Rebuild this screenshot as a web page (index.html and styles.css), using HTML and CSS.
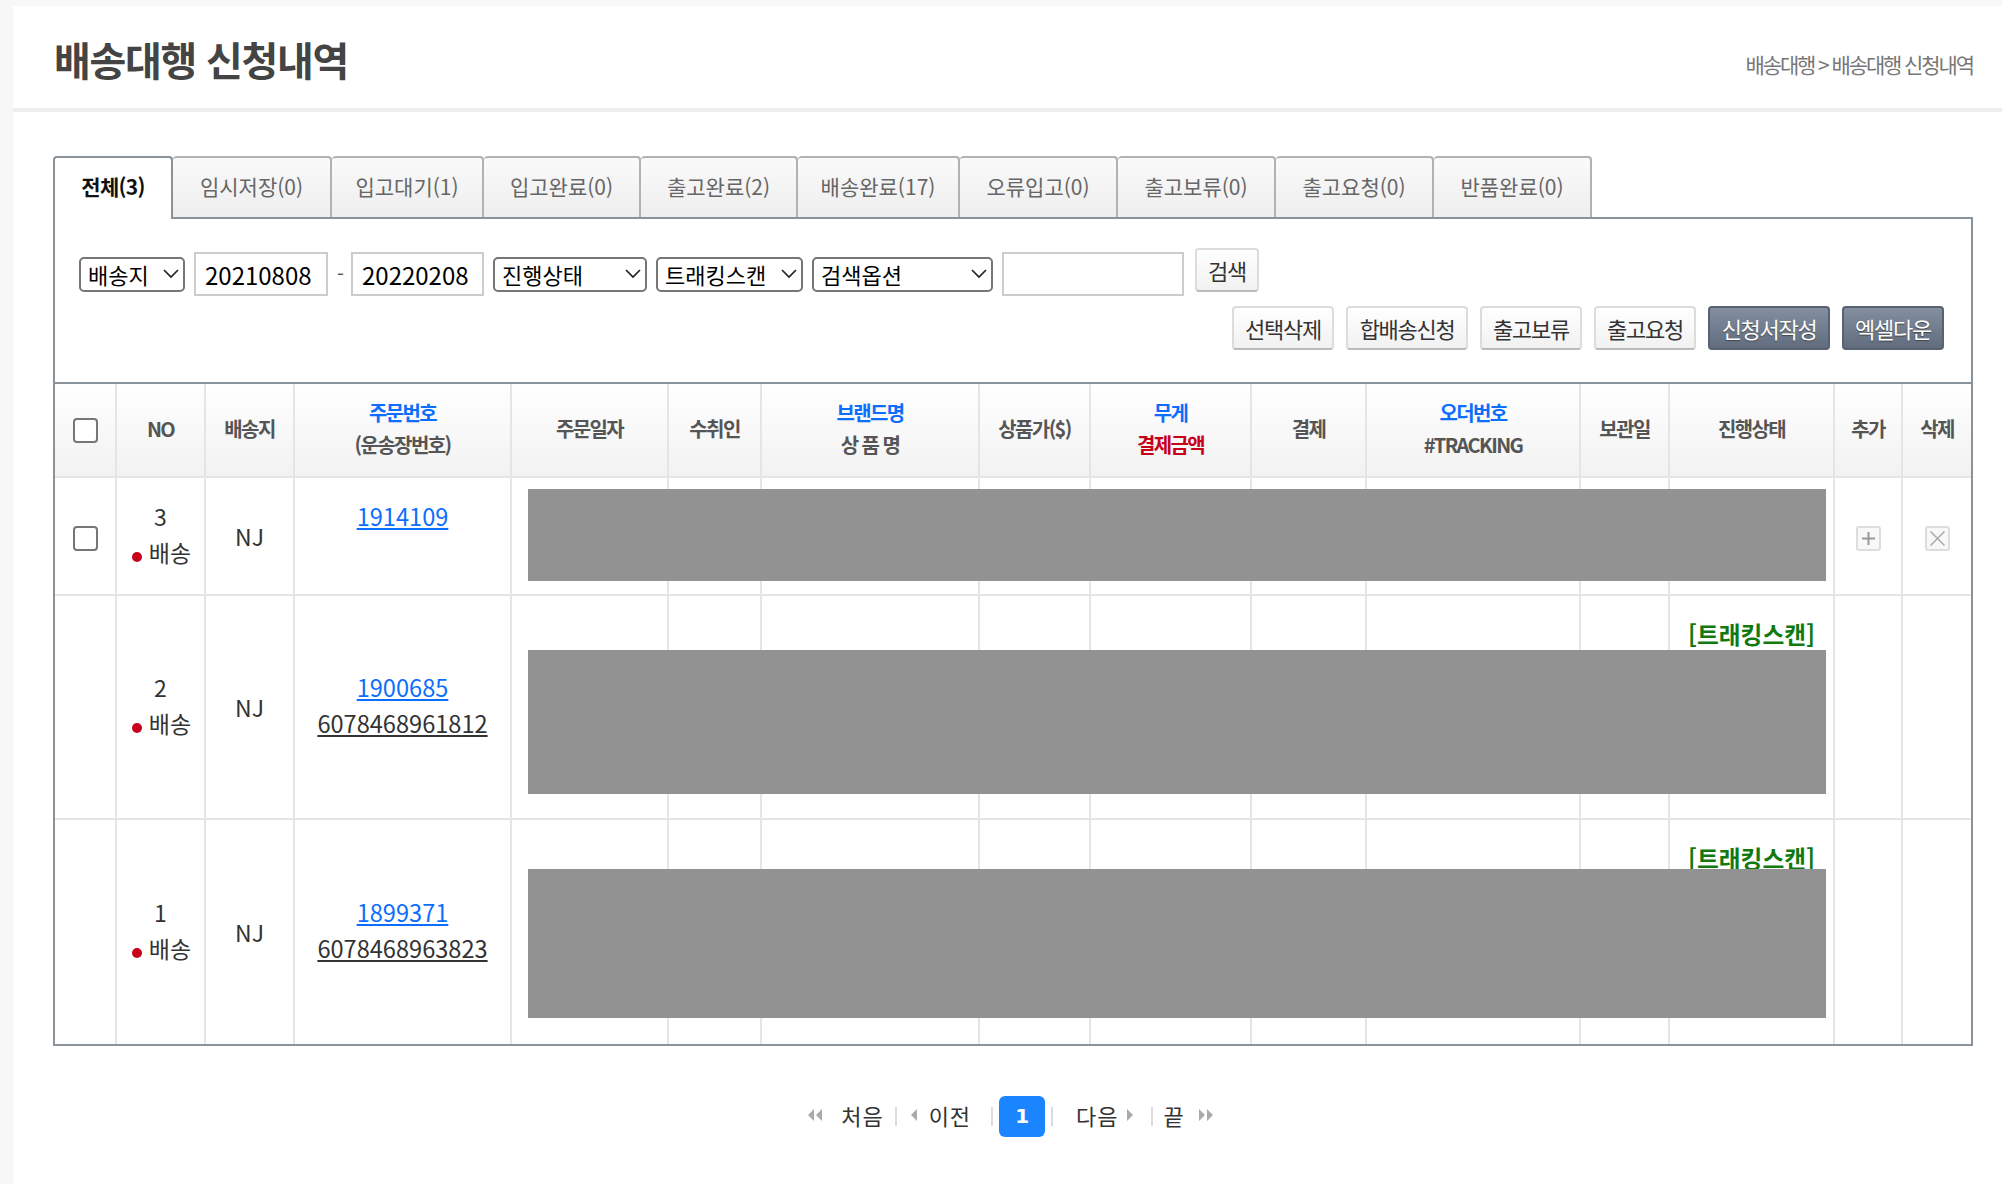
FILE: index.html
```html
<!doctype html>
<html lang="ko">
<head>
	<meta charset="UTF-8">
	<title>배송대행 신청내역</title>
	<link rel="stylesheet" href="styles.css">
</head>
<body>
<div class="wrap">

	<div class="page-head">
		<h1>배송대행 신청내역</h1>
		<p class="crumb">배송대행 &gt; 배송대행 신청내역</p>
	</div>

	<div class="content">
		<ul class="tabs">
			<li class="active">전체(3)</li>
			<li>임시저장(0)</li>
			<li>입고대기(1)</li>
			<li>입고완료(0)</li>
			<li>출고완료(2)</li>
			<li>배송완료(17)</li>
			<li>오류입고(0)</li>
			<li>출고보류(0)</li>
			<li>출고요청(0)</li>
			<li>반품완료(0)</li>
		</ul>

		<div class="panel">
			<div class="filter">
				<select class="sel-place"><option>배송지</option></select>
				<input class="date date-from" type="text" value="20210808">
				<span class="dash">-</span>
				<input class="date date-to" type="text" value="20220208">
				<select class="sel-state"><option>진행상태</option></select>
				<select class="sel-scan"><option>트래킹스캔</option></select>
				<select class="sel-option"><option>검색옵션</option></select>
				<input class="keyword" type="text">
				<button class="btn btn-search">검색</button>
			</div>

			<div class="actions">
				<button class="btn">선택삭제</button>
				<button class="btn">합배송신청</button>
				<button class="btn">출고보류</button>
				<button class="btn">출고요청</button>
				<button class="btn btn-dark">신청서작성</button>
				<button class="btn btn-dark">엑셀다운</button>
			</div>

			<table class="list">
				<colgroup>
					<col class="c-check"><col class="c-no"><col class="c-place"><col class="c-order">
					<col class="c-date"><col class="c-name"><col class="c-brand"><col class="c-price">
					<col class="c-weight"><col class="c-pay"><col class="c-track"><col class="c-keep">
					<col class="c-state"><col class="c-add"><col class="c-del">
				</colgroup>
				<thead>
					<tr>
						<th><input class="check" type="checkbox"></th>
						<th>NO</th>
						<th>배송지</th>
						<th><span class="blue">주문번호</span><br>(운송장번호)</th>
						<th>주문일자</th>
						<th>수취인</th>
						<th><span class="blue">브랜드명</span><br>상 품 명</th>
						<th>상품가($)</th>
						<th><span class="blue">무게</span><br><span class="red">결제금액</span></th>
						<th>결제</th>
						<th><span class="blue">오더번호</span><br>#TRACKING</th>
						<th>보관일</th>
						<th>진행상태</th>
						<th>추가</th>
						<th>삭제</th>
					</tr>
				</thead>
				<tbody>
					<tr class="row-1">
						<td><input class="check" type="checkbox"></td>
						<td class="two-line">3<br><i class="dot"></i>배송</td>
						<td>NJ</td>
						<td class="two-line"><a class="order" href="#">1914109</a><br>&nbsp;</td>
						<td class="hide-cell"><div class="redact redact-1"></div></td>
						<td></td><td></td><td></td><td></td><td></td><td></td><td></td><td></td>
						<td>
							<span class="icon-btn">
								<svg width="21" height="21" viewBox="0 0 21 21"><path d="M10.5 4v13M4 10.5h13" stroke="#999" stroke-width="2" fill="none"/></svg>
							</span>
						</td>
						<td>
							<span class="icon-btn">
								<svg width="21" height="21" viewBox="0 0 21 21"><path d="M3.5 3.5l14 14M17.5 3.5l-14 14" stroke="#aaa" stroke-width="1.5" fill="none"/></svg>
							</span>
						</td>
					</tr>
					<tr class="row-2">
						<td></td>
						<td class="two-line">2<br><i class="dot"></i>배송</td>
						<td>NJ</td>
						<td class="two-line"><a class="order" href="#">1900685</a><br><a class="invoice" href="#">6078468961812</a></td>
						<td class="hide-cell"><div class="redact redact-2"></div></td>
						<td></td><td></td><td></td><td></td><td></td><td></td><td></td>
						<td class="state"><span class="scan">[트래킹스캔]</span></td>
						<td></td><td></td>
					</tr>
					<tr class="row-3">
						<td></td>
						<td class="two-line">1<br><i class="dot"></i>배송</td>
						<td>NJ</td>
						<td class="two-line"><a class="order" href="#">1899371</a><br><a class="invoice" href="#">6078468963823</a></td>
						<td class="hide-cell"><div class="redact redact-3"></div></td>
						<td></td><td></td><td></td><td></td><td></td><td></td><td></td>
						<td class="state"><span class="scan">[트래킹스캔]</span></td>
						<td></td><td></td>
					</tr>
				</tbody>
			</table>
		</div>

		<div class="paging">
			<svg class="pg-arrow pg-first" width="14" height="12" viewBox="0 0 14 12"><path d="M6 0v12L0 6zM14 0v12L8 6z" fill="#aaa"/></svg>
			<a class="pg-text" href="#">처음</a>
			<i class="pg-sep sep-1"></i>
			<svg class="pg-arrow pg-prev" width="6" height="12" viewBox="0 0 6 12"><path d="M6 0v12L0 6z" fill="#aaa"/></svg>
			<a class="pg-text" href="#">이전</a>
			<i class="pg-sep sep-2"></i>
			<a class="pg-num" href="#">1</a>
			<i class="pg-sep sep-3"></i>
			<a class="pg-text" href="#">다음</a>
			<svg class="pg-arrow pg-next" width="6" height="12" viewBox="0 0 6 12"><path d="M0 0v12l6-6z" fill="#aaa"/></svg>
			<i class="pg-sep sep-4"></i>
			<a class="pg-text" href="#">끝</a>
			<svg class="pg-arrow pg-last" width="14" height="12" viewBox="0 0 14 12"><path d="M0 0v12l6-6zM8 0v12l6-6z" fill="#aaa"/></svg>
		</div>
	</div>

</div>
</body>
</html>
```

FILE: styles.css
```css
* {
	box-sizing: border-box;
}

body {
	margin: 0;
	padding: 0;
	background: #f7f7f7;
	font-family: "Noto Sans CJK KR", "Liberation Sans", sans-serif;
	color: #333;
}

.wrap {
	margin: 6px 0 0 13px;
	min-height: 1178px;
	background: #fff;
}

/* page title */
.page-head {
	display: flex;
	justify-content: space-between;
	align-items: center;
	height: 106px;
	padding: 0 29px 0 41px;
	border-bottom: 4px solid #eeeef0;
}

.page-head h1 {
	margin: 4px 0 0;
	font-size: 40px;
	font-weight: 700;
	letter-spacing: -1.3px;
	color: #444;
}

.crumb {
	margin: 14px 0 0;
	font-size: 21px;
	letter-spacing: -2.1px;
	color: #777;
}

.content {
	padding: 44px 29px 0 40px;
}

/* tabs */
.tabs {
	display: flex;
	margin: 0;
	padding: 0;
	list-style: none;
}

.tabs li {
	position: relative;
	width: 158px;
	height: 61px;
	margin-bottom: -2px;
	border: 2px solid #b0b3b6;
	border-bottom: 0;
	border-left-width: 0;
	border-radius: 4px 4px 0 0;
	background: linear-gradient(#fafafa, #eee);
	font-size: 21px;
	line-height: 56px;
	text-align: center;
	color: #666;
}

.tabs li:nth-child(2) { width: 159px; }
.tabs li:nth-child(3) { width: 152px; }
.tabs li:nth-child(4) { width: 157px; }
.tabs li:nth-child(5) { width: 157px; }
.tabs li:nth-child(6) { width: 162px; }

.tabs li.active {
	z-index: 1;
	width: 120px;
	height: 63px;
	border-left-width: 2px;
	border-color: #8a929a;
	background: #fff;
	font-weight: 700;
	letter-spacing: -0.7px;
	color: #111;
}

.panel {
	border: 2px solid #8a929a;
}

/* search row */
.filter {
	display: flex;
	align-items: center;
	gap: 9px;
	height: 44px;
	margin-top: 33px;
	padding-left: 24px;
}

.filter select {
	appearance: none;
	height: 35px;
	padding: 0 0 0 7px;
	border: 2px solid #767676;
	border-radius: 5px;
	background: #fff url("data:image/svg+xml,%3Csvg xmlns='http://www.w3.org/2000/svg' width='16' height='10'%3E%3Cpath d='M1 1l7 7 7-7' fill='none' stroke='%23222' stroke-width='1.7'/%3E%3C/svg%3E") no-repeat right 4px center;
	font-family: inherit;
	font-size: 22px;
	line-height: 29px;
	color: #000;
}

.filter input {
	height: 44px;
	padding: 0 9px;
	border: 2px solid #ccc;
	background: #fff;
	font-family: inherit;
	font-size: 24px;
	color: #000;
	outline: 0;
}

.sel-place { width: 106px; }
.date-from { width: 134px; }
.date-to { width: 133px; }
.sel-state { width: 154px; }
.sel-scan { width: 147px; }
.sel-option { width: 181px; }
.keyword { width: 182px; }

.dash {
	width: 5px;
	font-size: 20px;
	line-height: 1;
	color: #555;
}

/* buttons */
.btn {
	height: 44px;
	padding: 0;
	border: 2px solid #dcdcdc;
	border-bottom-color: #bbb;
	border-radius: 4px;
	background: linear-gradient(#fff, #f1f1f1);
	font-family: inherit;
	font-size: 22px;
	letter-spacing: -1.3px;
	color: #333;
}

.btn-search {
	width: 64px;
	margin: -8px 0 0 2px;
}

.actions {
	display: flex;
	justify-content: flex-end;
	gap: 12px;
	margin-top: 10px;
	margin-bottom: 32px;
	padding-right: 27px;
}

.actions .btn {
	width: 102px;
}

.actions .btn:nth-child(2),
.actions .btn:nth-child(5) {
	width: 122px;
}

.actions .btn-dark {
	border-color: #59636f;
	background: linear-gradient(#838fa0, #616d7e);
	color: #fff;
	text-shadow: 0 1px 1px #444;
}

/* table */
.list {
	width: 100%;
	table-layout: fixed;
	border-collapse: separate;
	border-spacing: 0;
	border-top: 2px solid #8a929a;
}

.c-check { width: 62px; }
.c-no { width: 89px; }
.c-place { width: 89px; }
.c-order { width: 217px; }
.c-date { width: 157px; }
.c-name { width: 93px; }
.c-brand { width: 218px; }
.c-price { width: 111px; }
.c-weight { width: 161px; }
.c-pay { width: 115px; }
.c-track { width: 214px; }
.c-keep { width: 89px; }
.c-state { width: 165px; }
.c-add { width: 68px; }
.c-del { width: 68px; }

.list th,
.list td {
	padding: 0;
	border-right: 2px solid #e5e5e5;
	border-bottom: 2px solid #e5e5e5;
	text-align: center;
	vertical-align: middle;
}

.list th:last-child,
.list td:last-child {
	border-right: 0;
}

.list th {
	height: 94px;
	padding-bottom: 2px;
	background: linear-gradient(#fff, #f2f2f2);
	font-size: 20px;
	font-weight: 700;
	line-height: 32px;
	letter-spacing: -1.6px;
	color: #555;
}

.list td {
	font-size: 23px;
	line-height: 36px;
	color: #333;
}

.list td.two-line {
	padding-bottom: 4px;
}

.row-1 td { height: 118px; }
.row-2 td { height: 224px; }
.row-3 td { height: 224px; border-bottom: 0; }

.blue { color: #0d6efd; }
.red { color: #c8001a; }

.check {
	appearance: none;
	width: 25px;
	height: 25px;
	margin: 0 0 2px;
	border: 2px solid #767676;
	border-radius: 4px;
	background: #fff;
	vertical-align: middle;
}

.dot {
	display: inline-block;
	width: 10px;
	height: 10px;
	margin: 0 7px 0 2px;
	border-radius: 50%;
	background: #c8001a;
}

.order {
	font-size: 23.6px;
	color: #0d6efd;
}

.invoice {
	font-size: 23.6px;
	color: #333;
}

.list td.state {
	padding-top: 20px;
	vertical-align: top;
}

.scan {
	font-weight: 700;
	font-size: 23.7px;
	color: #107a10;
}

.icon-btn {
	display: inline-flex;
	width: 25px;
	height: 25px;
	margin-bottom: 2px;
	border: 2px solid #ddd;
	border-radius: 3px;
	background: #f8f8f8;
	vertical-align: middle;
}

/* blocked-out columns lie over the row */
.hide-cell {
	position: relative;
}

.redact {
	position: absolute;
	left: 16px;
	width: 1298px;
	background: #929292;
}

.redact-1 { top: 11px; height: 92px; }
.redact-2 { top: 54px; height: 144px; }
.redact-3 { top: 49px; height: 149px; }

/* paging */
.paging {
	display: flex;
	justify-content: center;
	align-items: center;
	height: 41px;
	margin-top: 50px;
	padding-right: 5px;
	font-size: 22px;
}

.pg-text {
	padding-bottom: 4px;
	letter-spacing: 1px;
	color: #333;
	text-decoration: none;
}

.pg-arrow {
	margin-bottom: 3px;
}

.pg-sep {
	width: 2px;
	height: 19px;
	background: #ddd;
}

.pg-first { margin-right: 19px; }
.sep-1 { margin: 0 14px 0 11px; }
.pg-prev { margin-right: 12px; }
.sep-2 { margin: 0 6px 0 20px; }
.sep-3 { margin: 0 23px 0 6px; }
.pg-next { margin-left: 8px; }
.sep-4 { margin: 0 11px 0 18px; }
.pg-last { margin-left: 14px; }

.pg-num {
	width: 46px;
	height: 41px;
	border-radius: 6px;
	background: #1a85ff;
	font-family: "DejaVu Sans", sans-serif;
	font-size: 20px;
	font-weight: 700;
	line-height: 41px;
	text-align: center;
	color: #fff;
	text-decoration: none;
}
```
